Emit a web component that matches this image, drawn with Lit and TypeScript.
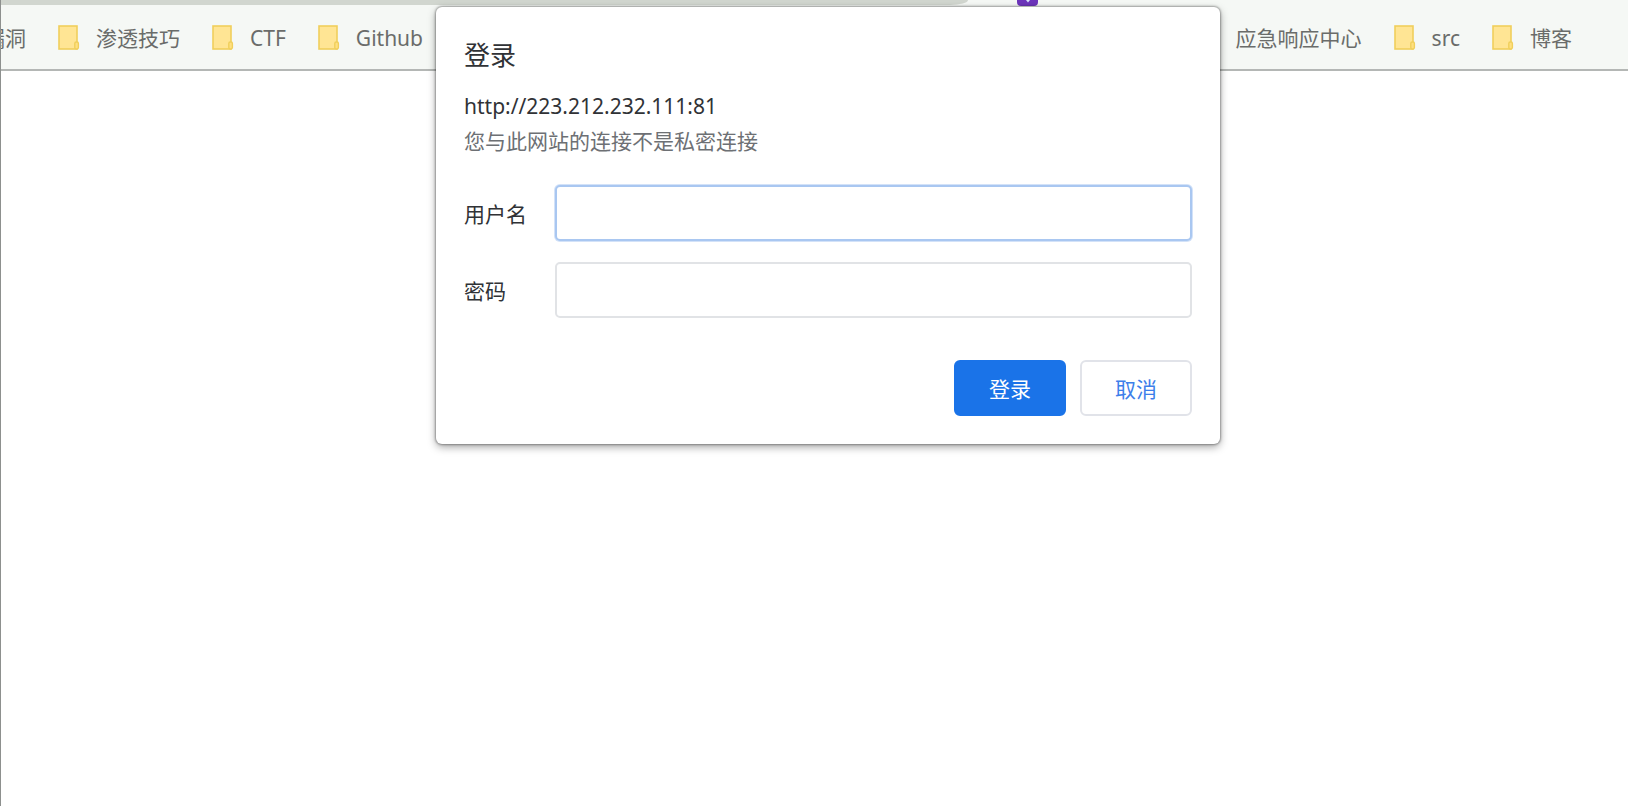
import { LitElement, css, html, svg } from "lit";
import { customElement } from "lit/decorators.js";

const folderIcon = html`<svg class="folder" viewBox="0 0 22 26" aria-hidden="true">
  ${svg`<rect x="1" y="1" width="18" height="23" fill="#ffe594" stroke="#f0cf5c" stroke-width="1.6"/>
  <rect x="16.8" y="17" width="3.6" height="7" rx="1.4" fill="#ffe080" stroke="#f0cf5c" stroke-width="1.4"/>`}
</svg>`;

@customElement("bookmark-bar")
class BookmarkBar extends LitElement {
  static styles = css`
    :host {
      display: block;
      overflow: hidden;
      background: #f5f8f5;
      border-bottom: 2px solid #b4b7b5;
    }
    .bar {
      display: flex;
      justify-content: space-between;
      padding: 1px 56px 0 0;
      height: 63px;
    }
    .group {
      display: flex;
      align-items: center;
      gap: 32px;
    }
    .leading {
      margin-left: -55px;
    }
    .item {
      display: flex;
      align-items: center;
      gap: 16px;
      color: #6a6c6a;
      text-decoration: none;
      white-space: nowrap;
      font-size: 21px;
      line-height: 32px;
    }
    .folder {
      width: 22px;
      height: 26px;
      flex: none;
    }
  `;

  private link(name: string) {
    return html`<a class="item" href="#">${folderIcon}<span>${name}</span></a>`;
  }

  render() {
    return html`<nav class="bar" aria-label="书签">
      <div class="group leading">${["漏洞", "渗透技巧", "CTF", "Github"].map((n) => this.link(n))}</div>
      <div class="group">${["应急响应中心", "src", "博客"].map((n) => this.link(n))}</div>
    </nav>`;
  }
}

@customElement("login-dialog")
class LoginDialog extends LitElement {
  static styles = css`
    :host {
      display: block;
      box-sizing: border-box;
      padding: 28px;
      background: #fff;
      border-radius: 6px;
      box-shadow: 0 0 2px 1px rgba(0, 0, 0, 0.3), 0 3px 8px rgba(0, 0, 0, 0.36);
      color: #303236;
      font-size: 21px;
    }
    .title {
      margin: 0 0 14px;
      font-size: 26px;
      line-height: 40px;
      font-weight: 400;
    }
    .line {
      margin: 0;
      line-height: 35px;
    }
    .note {
      color: #6d7074;
    }
    .fields {
      display: grid;
      grid-template-columns: auto 1fr;
      align-items: center;
      gap: 21px 28px;
      margin: 26px 0 42px;
    }
    .input {
      box-sizing: border-box;
      width: 100%;
      height: 56px;
      padding: 0 14px;
      border: 2px solid #e1e3e6;
      border-radius: 5px;
      background: #fff;
      color: inherit;
      font: inherit;
      outline: none;
    }
    .active {
      border-color: #a9c7f1;
      box-shadow: 0 0 0 1px #d3e2f8;
    }
    .actions {
      display: flex;
      justify-content: flex-end;
      gap: 14px;
    }
    .button {
      box-sizing: border-box;
      width: 112px;
      height: 56px;
      padding: 0;
      border: 2px solid #e1e3e9;
      border-radius: 6px;
      background: #fff;
      color: #3d7eea;
      font: inherit;
    }
    .primary {
      border-color: #1a73e8;
      background: #1a73e8;
      color: #fff;
    }
  `;

  render() {
    return html`<form @submit=${(e: Event) => e.preventDefault()}>
      <h1 class="title">登录</h1>
      <p class="line">http://223.212.232.111:81</p>
      <p class="line note">您与此网站的连接不是私密连接</p>
      <div class="fields">
        <label for="user">用户名</label>
        <input class="input active" id="user" type="text" />
        <label for="pass">密码</label>
        <input class="input" id="pass" type="password" />
      </div>
      <div class="actions">
        <button class="button primary" type="submit">登录</button>
        <button class="button" type="button">取消</button>
      </div>
    </form>`;
  }
}

@customElement("app-root")
class AppRoot extends LitElement {
  static styles = css`
    :host {
      display: block;
      position: relative;
      box-sizing: border-box;
      min-height: 100vh;
      background: #fff;
      border-left: 1px solid #8d908e;
      font-family: "Noto Sans", "Noto Sans CJK SC", sans-serif;
    }
    .toolbar {
      display: flex;
      height: 5px;
      background: #f5f8f5;
    }
    .address {
      flex: 0 0 auto;
      width: 967px;
      max-width: 100%;
      background: #d1d6cf;
      border-bottom-right-radius: 18px 5px;
    }
    .badge {
      position: absolute;
      top: 0;
      left: 1016px;
      width: 21px;
      height: 6px;
    }
    .dialog {
      position: absolute;
      top: 7px;
      left: 435px;
      width: 784px;
    }
  `;

  render() {
    return html`
      <div class="toolbar"><div class="address"></div></div>
      <bookmark-bar></bookmark-bar>
      <svg class="badge" viewBox="0 0 21 6" aria-hidden="true">
        <path d="M0 0H21V2Q21 6 17 6H4Q0 6 0 2Z" fill="#6d35bb" />
        <path d="M9 0H13L11 2.5Z" fill="#d8e4fb" />
      </svg>
      <login-dialog class="dialog" role="dialog" aria-label="登录"></login-dialog>
    `;
  }
}
